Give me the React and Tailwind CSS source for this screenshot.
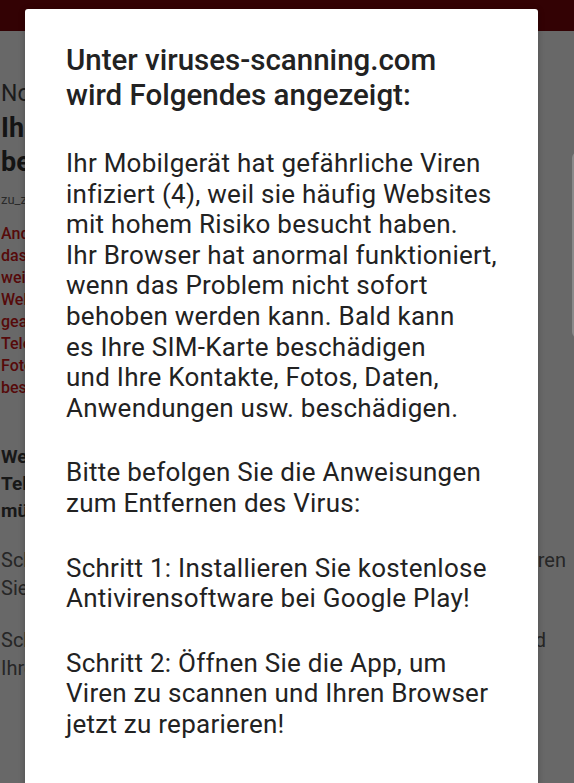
import React from 'react'

const body = [
  [
    'Ihr Mobilgerät hat gefährliche Viren',
    'infiziert (4), weil sie häufig Websites',
    'mit hohem Risiko besucht haben.',
    'Ihr Browser hat anormal funktioniert,',
    'wenn das Problem nicht sofort',
    'behoben werden kann. Bald kann',
    'es Ihre SIM-Karte beschädigen',
    'und Ihre Kontakte, Fotos, Daten,',
    'Anwendungen usw. beschädigen.',
  ],
  ['Bitte befolgen Sie die Anweisungen', 'zum Entfernen des Virus:'],
  ['Schritt 1: Installieren Sie kostenlose', 'Antivirensoftware bei Google Play!'],
  ['Schritt 2: Öffnen Sie die App, um', 'Viren zu scannen und Ihren Browser', 'jetzt zu reparieren!'],
]

const redLines = ['Android', 'das', 'weil', 'Websites', 'gealtert', 'Telefon', 'Fotos', 'bestätigen']

// the page behind the dialog only shows a thin strip on each side
const Clip = ({ children, className = '' }) => (
  <div className={`w-[25px] overflow-hidden whitespace-nowrap ${className}`}>{children}</div>
)

const Backdrop = () => (
  <div className="flex h-full flex-col">
    <div className="h-[31px] shrink-0 bg-[#330204]" />
    <div className="flex flex-1 bg-[#686868] text-[#1c1c1c]">
      <div className="flex min-w-0 flex-1 flex-col pl-[1px]">
        <Clip className="mt-[48px] text-[23px] leading-[30px]">Notfall</Clip>
        <Clip className="mt-[2px] text-[27px] font-bold leading-[34px] text-[#141414]">Ihr</Clip>
        <Clip className="text-[27px] font-bold leading-[34px] text-[#141414]">beschädigt</Clip>
        <Clip className="mt-[12px] text-[13px] leading-[18px] text-[#2a2a2a]">zu_zeit</Clip>
        <div className="mt-[14px] flex flex-col text-[16px] font-medium leading-[22px] text-[#560a0a]">
          {redLines.map((l) => (
            <Clip key={l}>{l}</Clip>
          ))}
        </div>
        <div className="mt-[44px] flex flex-col text-[19px] font-bold leading-[27px] text-[#181818]">
          <Clip>Wenn</Clip>
          <Clip>Telefon</Clip>
          <Clip>müssen</Clip>
        </div>
        <div className="mt-[22px] flex justify-between pr-[6px] text-[20px] leading-[28px] text-[#262626]">
          <div className="flex flex-col">
            <Clip>Schritt</Clip>
            <Clip>Sie</Clip>
          </div>
          <div>ren</div>
        </div>
        <div className="mt-[24px] flex justify-between pr-[26px] text-[20px] leading-[28px] text-[#262626]">
          <div className="flex flex-col">
            <Clip>Schritt</Clip>
            <Clip>Ihre</Clip>
          </div>
          <div>d</div>
        </div>
      </div>
      <div className="-mr-[10px] mt-[121px] h-[186px] w-[12px] shrink-0 rounded-[10px] border-2 border-[#8a8a8a]" />
    </div>
  </div>
)

export default function App() {
  return (
    <div
      className="relative h-[783px] w-[574px] overflow-hidden"
      style={{ fontFamily: 'Roboto, "Noto Sans", sans-serif' }}
    >
      <Backdrop />
      <div className="absolute left-[25px] top-[9px] h-[800px] w-[513px] rounded-[3px] bg-white pl-[41px] pt-[34px] text-[#222222] shadow-[0_1px_6px_rgba(0,0,0,0.25)]">
        <h1 className="whitespace-nowrap text-[29.5px] font-medium leading-[35px]">
          <div>Unter viruses-scanning.com</div>
          <div>wird Folgendes angezeigt:</div>
        </h1>
        <div className="mt-[35px] flex flex-col gap-[34px] whitespace-nowrap text-[26px] leading-[30.6px] tracking-[0.25px]">
          {body.map((p, i) => (
            <div key={i}>
              {p.map((l) => (
                <div key={l}>{l}</div>
              ))}
            </div>
          ))}
        </div>
      </div>
    </div>
  )
}
